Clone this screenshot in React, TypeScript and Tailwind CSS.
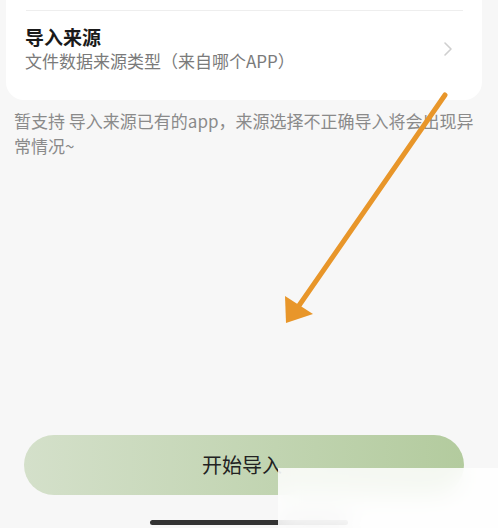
import React from 'react';

const FONT = { fontFamily: '"Noto Sans CJK SC", "Noto Sans", sans-serif' };

export default function App() {
  return (
    <div className="relative h-[528px] w-[498px] overflow-hidden bg-[#f7f7f7]" style={FONT}>
      <div className="flex h-full flex-col">
        {/* 卡片（上半部分已滚出屏幕） */}
        <div className="ml-[6px] mr-[16px] rounded-b-[18px] bg-white px-[19px] pt-[10px]">
          <div className="ml-[1px] h-px bg-[#eeeeee]" />
          <div className="flex h-[89px] items-center justify-between pb-[14px] pr-[10px]">
            <div className="flex flex-col">
              <span className="text-[19px] font-bold leading-[24px] text-[#1a1a1a]">导入来源</span>
              <span className="mt-[1px] text-[17px] leading-[22px] text-[#7a7a7a]">文件数据来源类型（来自哪个APP）</span>
            </div>
            <svg width="10" height="16" viewBox="0 0 10 16">
              <path d="M2 2 L8 8 L2 14" fill="none" stroke="#cfcfcf" strokeWidth="1.6" strokeLinecap="round" strokeLinejoin="round" />
            </svg>
          </div>
        </div>

        <p className="mt-[8px] px-[14px] text-[17px] leading-[25px] text-[#8a8a8a]">
          暂支持 导入来源已有的app，来源选择不正确导入将会出现异常情况~
        </p>

        <div className="mt-auto px-[24px] pb-[33px] pr-[34px]">
          <button className="flex h-[60px] w-full items-center justify-center rounded-full bg-gradient-to-r from-[#d4e0ca] to-[#b3cb9e] pr-[4px] text-[20px] text-[#222222]">
            开始导入
          </button>
        </div>
      </div>

      {/* 底部横条 */}
      <div className="absolute bottom-[3px] left-[150px] h-[5px] w-[198px] rounded-full bg-[#333333]" />

      {/* 遮挡块 */}
      <div className="absolute left-[278px] top-[468px] h-[60px] w-[220px] bg-white/85 backdrop-blur-md" />

      {/* 橙色箭头 */}
      <svg className="pointer-events-none absolute left-0 top-0" width="498" height="528" viewBox="0 0 498 528">
        <line x1="445" y1="95" x2="298" y2="307" stroke="#e8962a" strokeWidth="5" strokeLinecap="round" />
        <polygon points="286,323 285,296 313,314" fill="#e8962a" />
      </svg>
    </div>
  );
}
